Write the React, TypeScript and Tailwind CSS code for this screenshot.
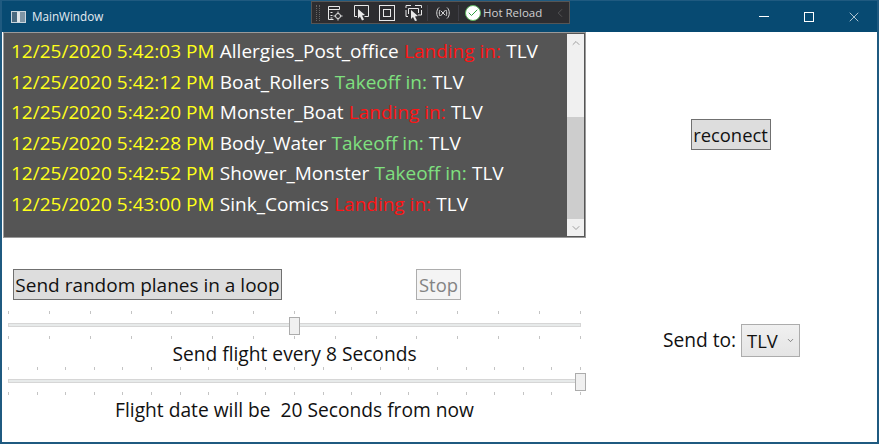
import React from 'react';
import { Check, ChevronDown, ChevronLeft, ChevronUp, X } from 'lucide-react';

const rows = [
  { time: '12/25/2020 5:42:03 PM', name: 'Allergies_Post_office', landing: true },
  { time: '12/25/2020 5:42:12 PM', name: 'Boat_Rollers', landing: false },
  { time: '12/25/2020 5:42:20 PM', name: 'Monster_Boat', landing: true },
  { time: '12/25/2020 5:42:28 PM', name: 'Body_Water', landing: false },
  { time: '12/25/2020 5:42:52 PM', name: 'Shower_Monster', landing: false },
  { time: '12/25/2020 5:43:00 PM', name: 'Sink_Comics', landing: true },
];

function ToolbarIcons() {
  return (
    <>
      <svg width="16" height="16" viewBox="0 0 16 16" fill="none" stroke="#e8e8e8" strokeWidth="1" className="ml-[7px]">
        <path d="M1.5 1.5h11v3M1.5 1.5v13h5M1.5 4.5h11M3.5 7.5h2M3.500 10.5h2M3.5 13h2" />
        <circle cx="11" cy="11" r="2.5" />
        <path d="M11 6.5v2M11 13.5v2M6.5 11h2M13.5 11h2" />
      </svg>
      <svg width="17" height="17" viewBox="0 0 17 17" fill="none" stroke="#e8e8e8" strokeWidth="1" className="ml-[10px]">
        <path d="M4 12.5H1.500V1.500h14v11h-4" />
        <path d="M5 5l7 6-3 .5 2 4-2 1-2-4-2 2z" fill="#e8e8e8" stroke="none" />
      </svg>
      <svg width="16" height="16" viewBox="0 0 16 16" fill="none" stroke="#e8e8e8" strokeWidth="1" className="ml-[9px]">
        <rect x="0.5" y="0.5" width="15" height="15" />
        <rect x="4.500" y="4.500" width="7" height="7" />
      </svg>
      <svg width="17" height="17" viewBox="0 0 17 17" fill="none" stroke="#e8e8e8" strokeWidth="1" className="ml-[10px]">
        <path d="M1 4V1.500h5M1 6v6.500h2M10 1.500h6.500V4M16.500 6v5H13M3.500 4.500h10V9M3.500 4.500V10" />
        <path d="M6 6l7 6-3 .5 2 4-2 .5-2-4-2 2z" fill="#e8e8e8" stroke="none" />
      </svg>
      <div className="ml-[5px] h-[16px] w-px bg-[#3f3f46]" />
      <svg width="16" height="14" viewBox="0 0 16 14" fill="none" stroke="#d8d8d8" strokeWidth="1" className="ml-[7px]">
        <path d="M4 1.500C1 4 1 10 4 12.500M12 1.500c3 2.500 3 8.500 0 11M5 4c-1 2-1 4 0 6M11 4c1 2 1 4 0 6M5.500 10l5-6M6 5c1 1 3 3 4 4" />
      </svg>
      <div className="ml-[7px] h-[16px] w-px bg-[#3f3f46]" />
      <div className="ml-[6px] flex h-[16px] w-[16px] items-center justify-center rounded-full border border-[#5fb65f] bg-white">
        <Check size={12} strokeWidth={2} className="text-[#2e9e3f]" />
      </div>
      <span className="ml-[2px] whitespace-nowrap font-['Open_Sans',sans-serif] text-[11.5px] text-[#d0d0d0]">Hot Reload</span>
      <ChevronLeft size={14} strokeWidth={1} className="ml-[11px] text-[#6f6f6f]" />
    </>
  );
}

function TitleBar() {
  return (
    <div className="relative flex h-[31px] shrink-0 items-center bg-[#074a72] text-white">
      <div className="ml-[9px] flex h-[12px] w-[15px] overflow-hidden border border-[#c8d4dc] bg-white">
        <div className="w-[5px] bg-[#4a6a80]" />
        <div className="w-[3px] bg-[#dfe6ea]" />
        <div className="flex-1 bg-[#7e95a5]" />
      </div>
      <span className="ml-[6px] font-['Open_Sans',sans-serif] text-[11.7px] text-[#e6edf2]">MainWindow</span>
      <div className="absolute left-[309px] top-0 flex h-[23px] w-[259px] items-center border border-[#555] bg-[#2d2d30] pl-[4px]">
        <div className="h-[16px] w-[4px] border-x border-dotted border-[#666]" />
        <ToolbarIcons />
      </div>
      <div className="ml-auto flex items-center">
        <div className="flex w-[46px] justify-center"><div className="h-px w-[10px] bg-white" /></div>
        <div className="flex w-[44px] justify-center"><div className="h-[10px] w-[10px] border border-white" /></div>
        <div className="flex w-[46px] justify-center"><X size={16} strokeWidth={1} /></div>
      </div>
    </div>
  );
}

function FlightList() {
  return (
    <div className="flex h-[206px] w-[583px] border border-[#9a9a9a] bg-[#555555] p-px text-[19px]">
      <div className="flex-1 pl-[6px] pt-[2px]">
        {rows.map(r => (
          <div key={r.time} className="flex h-[30.5px] items-center gap-[5.25px] whitespace-nowrap">
            <span className="text-[#ffff1a]">{r.time}</span>
            <span className="text-white">{r.name}</span>
            <span className={r.landing ? 'text-[#ff1414]' : 'text-[#7fe07f]'}>{r.landing ? 'Landing in:' : 'Takeoff in:'}</span>
            <span className="text-white">TLV</span>
          </div>
        ))}
      </div>
      <div className="flex w-[17px] flex-col bg-[#f0f0f0]">
        <div className="flex h-[17px] items-center justify-center"><ChevronUp size={12} className="text-[#a0a0a0]" /></div>
        <div className="h-[66px]" />
        <div className="flex-1 bg-[#cdcdcd]" />
        <div className="flex h-[17px] items-center justify-center"><ChevronDown size={12} className="text-[#a0a0a0]" /></div>
      </div>
    </div>
  );
}

function Slider({ ticks, pos, label, lead, labelGap }: { ticks: number; pos: number; label: string; lead: string; labelGap: string }) {
  const marks = Array.from({ length: ticks + 1 }, (_, i) => i);
  return (
    <div className={lead}>
      <div className="relative mx-[5px] flex w-[573px] flex-col">
        <div className="flex justify-between">
          {marks.map(i => <span key={i} className="h-[3px] w-px bg-[#c4c4c4]" />)}
        </div>
        <div className="mt-[9px] h-[4px] border border-[#d6d6d6] bg-[#e7eaea]" />
        <div className="mt-[9px] flex justify-between">
          {marks.map(i => <span key={i} className="h-[3px] w-px bg-[#c4c4c4]" />)}
        </div>
        <div
          className="absolute top-[6px] h-[18px] w-[11px] border border-[#acacac] bg-[#f0f0f0]"
          style={{ left: pos - 5 }}
        />
      </div>
      <div className={`whitespace-pre text-center text-[19.2px] leading-[24px] text-[#111] ${labelGap}`}>{label}</div>
    </div>
  );
}

export default function App() {
  return (
    <div className="flex h-[444px] w-[879px] flex-col border-x-2 border-b-2 border-t border-[#1f5a80] bg-white font-['Open_Sans',sans-serif] text-black">
      <TitleBar />
      <div className="flex flex-1">
        <div className="w-[584px] pl-px">
          <FlightList />
          <div className="flex pl-[10px] pt-[31px]">
            <button className="h-[31px] w-[269px] whitespace-nowrap border border-[#707070] bg-[#dddddd] pt-px text-center text-[19px] text-[#111]">
              Send random planes in a loop
            </button>
            <button className="ml-[134px] h-[31px] w-[45px] border border-[#adadad] bg-[#f4f4f4] text-[18.4px] text-[#838383]">
              Stop
            </button>
          </div>
          <Slider ticks={14} pos={286} label="Send flight every 8 Seconds" lead="pt-[11px]" labelGap="mt-[3px]" />
          <Slider ticks={20} pos={572} label="Flight date will be  20 Seconds from now" lead="pt-px" labelGap="mt-[3px]" />
        </div>
        <div className="flex flex-1 flex-col items-center">
          <button className="mr-[2px] mt-[87px] h-[31px] w-[80px] border border-[#707070] bg-[#dddddd] text-[18.4px] text-[#111]">
            reconect
          </button>
          <div className="mt-[174px] flex items-center gap-[5px]">
            <span className="text-[19.2px] text-[#111]">Send to:</span>
            <div className="flex h-[33px] w-[59px] items-center border border-[#acacac] bg-gradient-to-b from-[#f0f0f0] to-[#e5e5e5] pl-[5px]">
              <span className="text-[18.4px] text-[#111]">TLV</span>
              <ChevronDown size={9} strokeWidth={2} className="ml-[8px] text-[#606060]" />
            </div>
          </div>
        </div>
      </div>
    </div>
  );
}
